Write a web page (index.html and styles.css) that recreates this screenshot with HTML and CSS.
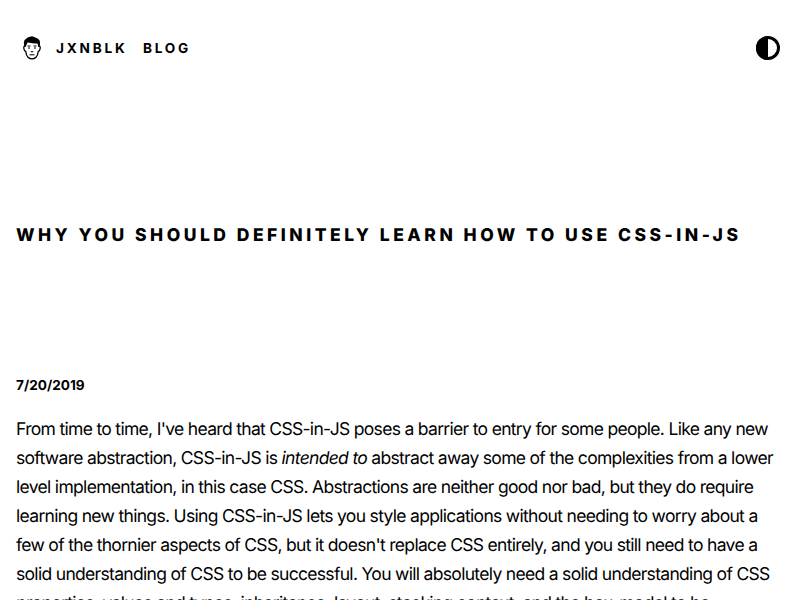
FILE: index.html
```html
<!DOCTYPE html>
<html lang="en">
<head>
<meta charset="utf-8">
<title>Why You Should Definitely Learn How to Use CSS-in-JS</title>
<link rel="stylesheet" href="styles.css">
</head>
<body>
<header class="header">
  <a class="brand" href="#">
    <svg class="face" viewBox="0 0 32 32" width="32" height="32" aria-hidden="true">
      <path class="skin" d="M9.300 14C7.500 13.500 7.500 16 8.300 18C8.600 19 9.200 19.300 9.700 19.300C10 22 10.500 23.800 12 25.300C14.200 27.500 17.800 27.500 20 25.300C21.500 23.800 22 22 22.300 19.300C23 19.300 23.400 19 23.700 18C24.500 16 24.500 13.500 22.700 14L22.500 9H9.500Z"/>
      <path class="hair" d="M8.600 15C7 9.500 8.500 7.500 10.500 6.500C12 5 14 5 15.500 4.300C17.500 4.500 19 5.500 20.500 6C23.700 7 25 10 23.400 15L22.300 14.500L21.500 11.500C18 11.500 14 11 11.500 10.500L9.800 14.500Z"/>
      <path class="line" d="M11.500 14H14.500M17.500 14H20.500M12 16H14M18 16H20M14.700 19.700H17.300M13.500 22.800H18.500"/>
    </svg>
    <span class="label">Jxnblk</span>
  </a>
  <a class="link label" href="#">Blog</a>
  <button class="toggle" aria-label="Toggle color mode">
    <svg viewBox="0 0 24 24" width="24" height="24"><circle cx="12" cy="12" r="10.500" fill="none" stroke="currentColor" stroke-width="3"/><path d="M12 0A12 12 0 0 0 12 24Z"/></svg>
  </button>
</header>
<main class="post">
  <h1 class="title">Why You Should Definitely Learn How to Use CSS-in-JS</h1>
  <div class="date">7/20/2019</div>
  <p class="text">From time to time, I've heard that CSS-in-JS poses a barrier to entry for some people. Like any new<br>
  software abstraction, CSS-in-JS is <em>intended to</em> abstract away some of the complexities from a lower<br>
  level implementation, in this case CSS. Abstractions are neither good nor bad, but they do require<br>
  learning new things. Using CSS-in-JS lets you style applications without needing to worry about a<br>
  few of the thornier aspects of CSS, but it doesn't replace CSS entirely, and you still need to have a<br>
  solid understanding of CSS to be successful. You will absolutely need a solid understanding of CSS<br>
  properties, values and types, inheritance, layout, stacking context, and the box-model to be</p>
</main>
</body>
</html>
```
FILE: styles.css
```css
* { box-sizing: border-box; }
body {
  margin: 0;
  height: 600px;
  overflow: hidden;
  background: #fff;
  color: #000;
  font-family: Inter, sans-serif;
  font-size: 17.5px;
  line-height: 29px;
  text-rendering: geometricPrecision;
}
.header {
  display: flex;
  align-items: center;
  height: 96px;
  padding: 0 20px 0 16px;
  font-size: 13.6px;
  font-weight: 700;
  letter-spacing: 2.78px;
  text-transform: uppercase;
}
.label { padding-top: 2px; }
.brand { display: flex; align-items: center; gap: 8px; margin-right: 15.5px; }
.brand, .link { color: inherit; text-decoration: none; }
.face { display: block; }
.skin { fill: #fff; stroke: #000; stroke-width: 1.3; }
.line { fill: none; stroke: #000; stroke-width: 1; }
.toggle {
  display: flex;
  margin-left: auto;
  padding: 0;
  border: 0;
  background: none;
  color: inherit;
}
.post { padding: 0 16px; }
.title {
  margin: 129px 0 128px;
  font-size: 17.5px;
  line-height: 22px;
  font-weight: 800;
  letter-spacing: 3.5px;
  text-transform: uppercase;
  white-space: nowrap;
}
.date { font-size: 13.6px; line-height: 22px; font-weight: 700; }
.text { margin: 18px 0; letter-spacing: -0.685px; white-space: nowrap; }
```
